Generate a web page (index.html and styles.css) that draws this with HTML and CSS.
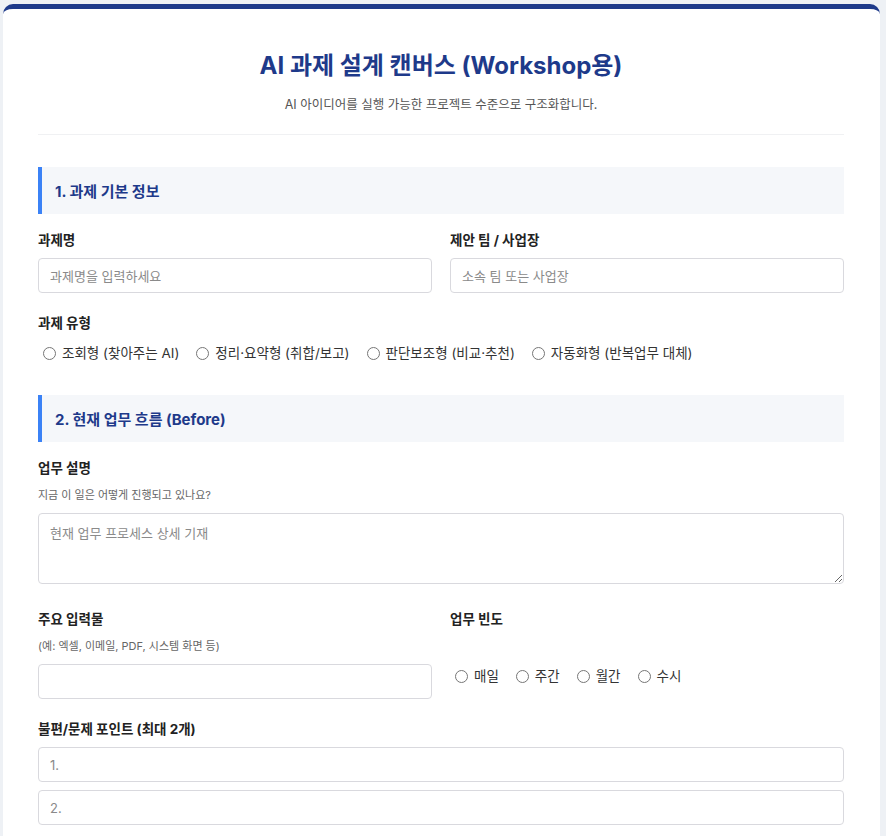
FILE: index.html
```html
<!DOCTYPE html>
<html lang="ko">
<head>
<meta charset="utf-8">
<title>AI 과제 설계 캔버스</title>
<link rel="stylesheet" href="styles.css">
</head>
<body>
<div class="canvas">
  <header class="page-head">
    <h1 class="title">AI 과제 설계 캔버스 (Workshop용)</h1>
    <p class="subtitle">AI 아이디어를 실행 가능한 프로젝트 수준으로 구조화합니다.</p>
  </header>

  <section class="section">
    <h2 class="section-title">1. 과제 기본 정보</h2>
    <div class="row">
      <div class="field">
        <label class="label">과제명</label>
        <input class="input" type="text" placeholder="과제명을 입력하세요">
      </div>
      <div class="field">
        <label class="label">제안 팀 / 사업장</label>
        <input class="input" type="text" placeholder="소속 팀 또는 사업장">
      </div>
    </div>
    <div class="field">
      <label class="label">과제 유형</label>
      <div class="radios">
        <label class="radio"><input type="radio" name="type"> 조회형 (찾아주는 AI)</label>
        <label class="radio"><input type="radio" name="type"> 정리·요약형 (취합/보고)</label>
        <label class="radio"><input type="radio" name="type"> 판단보조형 (비교·추천)</label>
        <label class="radio"><input type="radio" name="type"> 자동화형 (반복업무 대체)</label>
      </div>
    </div>
  </section>

  <section class="section">
    <h2 class="section-title">2. 현재 업무 흐름 (Before)</h2>
    <div class="field">
      <label class="label">업무 설명</label>
      <p class="hint">지금 이 일은 어떻게 진행되고 있나요?</p>
      <textarea class="textarea" placeholder="현재 업무 프로세스 상세 기재"></textarea>
    </div>
    <div class="row">
      <div class="field">
        <label class="label">주요 입력물</label>
        <p class="hint">(예: 엑셀, 이메일, PDF, 시스템 화면 등)</p>
        <input class="input" type="text">
      </div>
      <div class="field">
        <label class="label">업무 빈도</label>
        <div class="radios radios-freq">
          <label class="radio"><input type="radio" name="freq"> 매일</label>
          <label class="radio"><input type="radio" name="freq"> 주간</label>
          <label class="radio"><input type="radio" name="freq"> 월간</label>
          <label class="radio"><input type="radio" name="freq"> 수시</label>
        </div>
      </div>
    </div>
    <div class="field">
      <label class="label">불편/문제 포인트 (최대 2개)</label>
      <div class="stack">
        <input class="input" type="text" placeholder="1.">
        <input class="input" type="text" placeholder="2.">
      </div>
    </div>
  </section>
</div>
</body>
</html>
```

FILE: styles.css
```css
* { box-sizing: border-box; }

html, body { height: 100%; }

body {
  margin: 0;
  padding: 4px 6px 0 3px;
  background: #eef1f5;
  font-family: "Inter", "Noto Sans CJK KR", sans-serif;
  color: #333;
  overflow: hidden;
}

.canvas {
  background: #fff;
  border-top: 5px solid #1e3a8a;
  border-radius: 10px 10px 0 0;
  padding: 0 36px 40px 35px;
  min-height: 100%;
}

.page-head {
  text-align: center;
  padding-top: 40px;
  padding-bottom: 19px;
  border-bottom: 1px solid #f0f1f3;
  margin-bottom: 32px;
}

.title {
  margin: 0;
  font-size: 24px;
  line-height: 34px;
  font-weight: 700;
  color: #1e3a8a;
}

.subtitle {
  margin: 12px 0 0;
  font-size: 12.5px;
  line-height: 20px;
  color: #555;
}

.section {
  display: flex;
  flex-direction: column;
  gap: 20px;
  margin-bottom: 32px;
}

.section-title {
  margin: 0 0 -4px;
  height: 47px;
  display: flex;
  align-items: center;
  padding-left: 13px;
  background: #f5f7fa;
  border-left: 4px solid #3b82f6;
  font-size: 15px;
  font-weight: 700;
  color: #1e3a8a;
}

.row {
  display: grid;
  grid-template-columns: 1fr 1fr;
  gap: 18px;
}

.field {
  display: flex;
  flex-direction: column;
}

.label {
  display: block;
  font-size: 13.5px;
  line-height: 20px;
  font-weight: 700;
  color: #222;
  margin-bottom: 8px;
}

.hint {
  margin: 0 0 9px;
  font-size: 11px;
  line-height: 18px;
  color: #666;
}

.input {
  width: 100%;
  height: 35px;
  border: 1px solid #d9d9de;
  border-radius: 4px;
  padding: 0 11px;
  font-family: inherit;
  font-size: 13px;
  color: #333;
  background: #fff;
}

.input::placeholder, .textarea::placeholder {
  color: #8a8a8a;
}

.textarea {
  display: block;
  width: 100%;
  height: 71px;
  border: 1px solid #d9d9de;
  border-radius: 4px;
  padding: 9px 11px;
  font-family: inherit;
  font-size: 13px;
  color: #333;
  margin-bottom: 5px;
  resize: vertical;
}

.radios {
  display: flex;
  flex-wrap: wrap;
  margin-top: 2px;
  font-size: 13.5px;
  line-height: 20px;
  color: #333;
}

.radios-freq {
  margin-top: 29px;
}

.radio {
  display: inline-flex;
  align-items: center;
  gap: 6px;
  margin-right: 12px;
}

.radio input {
  margin: 0 0 0 5px;
}

.stack {
  display: flex;
  flex-direction: column;
  gap: 8px;
}
```
